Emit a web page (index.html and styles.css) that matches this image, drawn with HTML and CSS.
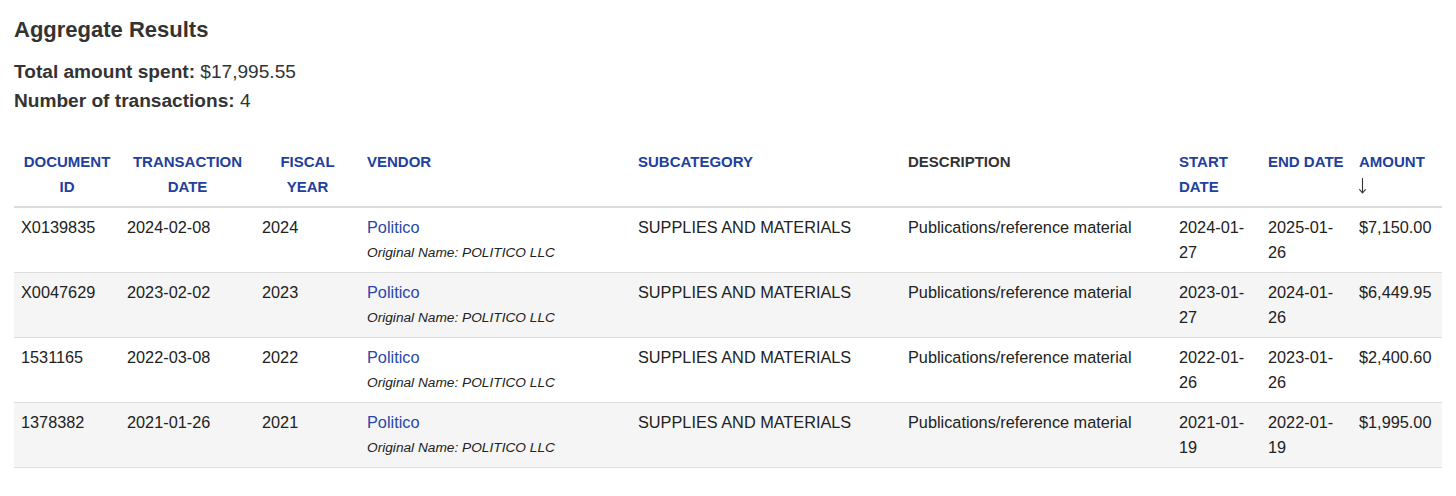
FILE: index.html
```html
<!DOCTYPE html>
<html lang="en">
<head>
<meta charset="utf-8">
<title>Aggregate Results</title>
<link rel="stylesheet" href="styles.css">
</head>
<body>
<main class="page">
  <h2 class="title">Aggregate Results</h2>
  <div class="summary">
    <div class="stat"><strong>Total amount spent:</strong> $17,995.55</div>
    <div class="stat"><strong>Number of transactions:</strong> 4</div>
  </div>
  <table class="results">
    <colgroup>
      <col class="c-doc"><col class="c-tdate"><col class="c-fy"><col class="c-vendor"><col class="c-sub"><col class="c-desc"><col class="c-start"><col class="c-end"><col class="c-amt">
    </colgroup>
    <thead>
      <tr>
        <th class="sort center">DOCUMENT ID</th>
        <th class="sort center">TRANSACTION DATE</th>
        <th class="sort center">FISCAL YEAR</th>
        <th class="sort">VENDOR</th>
        <th class="sort">SUBCATEGORY</th>
        <th class="plain">DESCRIPTION</th>
        <th class="sort">START DATE</th>
        <th class="sort nowrap">END DATE</th>
        <th class="sort">AMOUNT<br><svg class="arrow" width="7" height="16" viewBox="0 0 7 16" aria-label="sorted descending"><path d="M3.5 0.5 V15 M0.6 11.6 L3.5 15 L6.4 11.6" fill="none" stroke="#333333" stroke-width="1.1" stroke-linecap="round" stroke-linejoin="round"/></svg></th>
      </tr>
    </thead>
    <tbody>
      <tr>
        <td>X0139835</td><td>2024-02-08</td><td>2024</td>
        <td><a class="vendor" href="#">Politico</a><div class="orig">Original Name: POLITICO LLC</div></td>
        <td>SUPPLIES AND MATERIALS</td><td>Publications/reference material</td>
        <td>2024-01-27</td><td>2025-01-26</td><td>$7,150.00</td>
      </tr>
      <tr>
        <td>X0047629</td><td>2023-02-02</td><td>2023</td>
        <td><a class="vendor" href="#">Politico</a><div class="orig">Original Name: POLITICO LLC</div></td>
        <td>SUPPLIES AND MATERIALS</td><td>Publications/reference material</td>
        <td>2023-01-27</td><td>2024-01-26</td><td>$6,449.95</td>
      </tr>
      <tr>
        <td>1531165</td><td>2022-03-08</td><td>2022</td>
        <td><a class="vendor" href="#">Politico</a><div class="orig">Original Name: POLITICO LLC</div></td>
        <td>SUPPLIES AND MATERIALS</td><td>Publications/reference material</td>
        <td>2022-01-26</td><td>2023-01-26</td><td>$2,400.60</td>
      </tr>
      <tr>
        <td>1378382</td><td>2021-01-26</td><td>2021</td>
        <td><a class="vendor" href="#">Politico</a><div class="orig">Original Name: POLITICO LLC</div></td>
        <td>SUPPLIES AND MATERIALS</td><td>Publications/reference material</td>
        <td>2021-01-19</td><td>2022-01-19</td><td>$1,995.00</td>
      </tr>
    </tbody>
  </table>
</main>
</body>
</html>
```

FILE: styles.css
```css
html, body {
  margin: 0;
  padding: 0;
  background: #ffffff;
}

body {
  font-family: "Liberation Sans", Arial, sans-serif;
  color: #333333;
}

.page {
  padding: 17px 14px 0 14px;
}

.title {
  margin: 0;
  font-size: 22px;
  line-height: 26px;
  font-weight: 700;
  color: #333333;
}

.summary {
  margin-top: 14px;
}

.stat {
  font-size: 19.1px;
  line-height: 29px;
  color: #333333;
}

.stat strong {
  font-weight: 700;
}

.results {
  margin-top: 27px;
  width: 1428px;
  table-layout: fixed;
  border-collapse: collapse;
  border-spacing: 0;
}

.c-doc { width: 106px; }
.c-tdate { width: 135px; }
.c-fy { width: 105px; }
.c-vendor { width: 271px; }
.c-sub { width: 270px; }
.c-desc { width: 271px; }
.c-start { width: 89px; }
.c-end { width: 91px; }
.c-amt { width: 90px; }

.results th {
  padding: 7px;
  font-size: 15px;
  line-height: 25px;
  font-weight: 700;
  text-align: left;
  vertical-align: top;
  border-bottom: 2px solid #dddddd;
}

.results th.sort {
  color: #223f9c;
}

.results th.plain {
  color: #333333;
}

.results th.center {
  text-align: center;
}

.results th.nowrap {
  white-space: nowrap;
}

.arrow {
  display: inline-block;
  vertical-align: top;
  margin-top: 4px;
  margin-left: 0;
}

.results td {
  padding: 7px;
  font-size: 16.3px;
  line-height: 25px;
  vertical-align: top;
  color: #222222;
  border-bottom: 1px solid #dddddd;
}

.results tbody tr:nth-child(even) td {
  background: #f5f5f5;
}

.vendor {
  color: #2a47ab;
  text-decoration: none;
}

.orig {
  font-size: 13.7px;
  line-height: 25px;
  font-style: italic;
  color: #222222;
}
```
